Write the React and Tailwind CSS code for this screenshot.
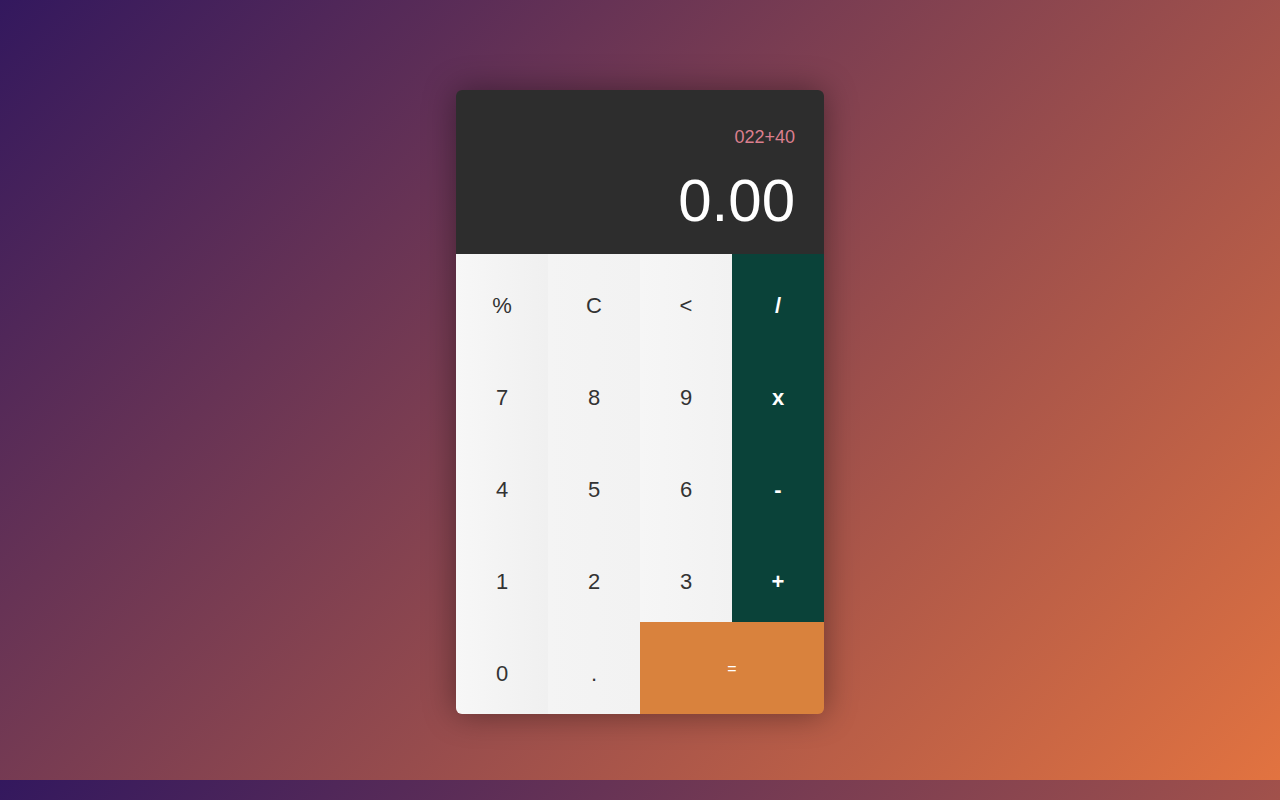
const keys = [
  [
    { label: '%', col: 0 },
    { label: 'C', col: 1 },
    { label: '<', col: 2 },
    { label: '/', op: true },
  ],
  [
    { label: '7', col: 0 },
    { label: '8', col: 1 },
    { label: '9', col: 2 },
    { label: 'x', op: true },
  ],
  [
    { label: '4', col: 0 },
    { label: '5', col: 1 },
    { label: '6', col: 2 },
    { label: '-', op: true },
  ],
  [
    { label: '1', col: 0 },
    { label: '2', col: 1 },
    { label: '3', col: 2 },
    { label: '+', op: true },
  ],
]

const colBg = [
  'bg-[linear-gradient(to_right,#f7f7f7,#f0f0f0)]',
  'bg-[linear-gradient(to_right,#f4f4f4,#f2f2f2)]',
  'bg-[linear-gradient(to_right,#f6f6f6,#f2f2f2)]',
]

const Key = ({ k }) => {
  if (k.op) {
    return (
      <button className="h-[92px] pt-[10px] bg-[#0a4239] text-white text-[22px] font-bold flex items-center justify-center">
        {k.label}
      </button>
    )
  }
  return (
    <button className={`h-[92px] pt-[10px] ${colBg[k.col]} text-[#333333] text-[22px] flex items-center justify-center`}>
      {k.label}
    </button>
  )
}

export default function App() {
  return (
    <div
      className="h-[800px] w-full bg-[linear-gradient(135deg,#33185e,#e27340)] bg-[length:100%_780px] bg-repeat flex justify-center pt-[90px]"
      style={{ fontFamily: '"Liberation Sans", Arial, sans-serif' }}
    >
      <div className="w-[368px] h-[624px] rounded-md overflow-hidden shadow-[0_0_32px_rgba(0,0,0,0.4)] flex flex-col">
        {/* display */}
        <div className="h-[164px] bg-[#2d2d2d] flex flex-col items-end pt-[38px] pr-[29px]">
          <div className="text-[18px] leading-[18px] text-[#db7f8e]">022+40</div>
          <div className="mt-[25px] text-[60px] leading-[60px] text-white">0.00</div>
        </div>

        {/* keys */}
        <div className="grid grid-cols-4">
          {keys.map((row, i) =>
            row.map((k, j) => <Key key={i + '-' + j} k={k} />)
          )}
          <button className={`h-[92px] pt-[10px] ${colBg[0]} text-[#333333] text-[22px] flex items-center justify-center`}>
            0
          </button>
          <button className={`h-[92px] pt-[10px] ${colBg[1]} text-[#333333] text-[22px] flex items-center justify-center`}>
            .
          </button>
          <button className="col-span-2 h-[92px] pt-[2px] bg-[#d9823d] text-white text-[16px] flex items-center justify-center">
            =
          </button>
        </div>
      </div>
    </div>
  )
}
